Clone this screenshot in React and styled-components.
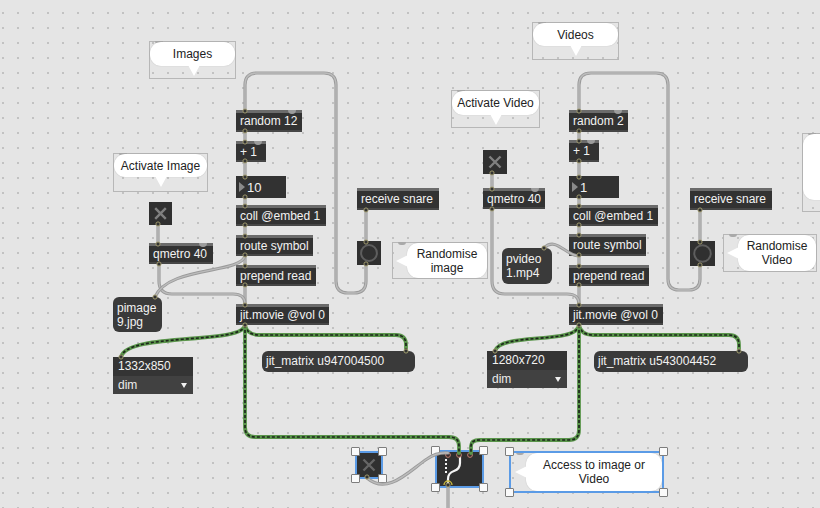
import React from "react";
import styled, { createGlobalStyle, css } from "styled-components";

const GlobalStyle = createGlobalStyle`
  html, body {
    margin: 0;
    padding: 0;
    background: #e5e5e5;
  }
  body {
    font-family: "Liberation Sans", Arial, sans-serif;
  }
`;

const Patcher = styled.div`
  position: relative;
  width: 820px;
  height: 508px;
  overflow: hidden;
  background-color: #e5e5e5;
  background-image: radial-gradient(circle at 1px 1px, #c2c2c2 0.9px, transparent 1.4px);
  background-size: 15px 15px;
  background-position: 2px 12px;
  font-family: "Liberation Sans", Arial, sans-serif;
`;

/* every patcher box sits at its own spot on the canvas */
const place = css`
  position: absolute;
  left: ${(p) => p.$x}px;
  top: ${(p) => p.$y}px;
  width: ${(p) => p.$w}px;
  height: ${(p) => p.$h}px;
  box-sizing: border-box;
`;

const ObjectBox = styled.div`
  ${place};
  background: #323232;
  box-shadow: inset 0 3px 0 #6b6b6b, inset 0 -2px 0 #464646;
  color: #f2f2f2;
  font-size: 12px;
  line-height: ${(p) => p.$h + 1}px;
  padding-left: 4px;
  white-space: nowrap;
`;

const InletMark = styled.span`
  position: absolute;
  top: 0;
  right: ${(p) => p.$right}px;
  width: 8px;
  height: 4px;
  border-radius: 0 0 4px 4px;
  background: #9c9c9c;
`;

const NumberBox = styled.div`
  ${place};
  display: flex;
  align-items: center;
  gap: 2px;
  background: #323232;
  color: #f2f2f2;
  font-size: 13px;
  padding-left: 3px;
`;

const Arrow = styled.span`
  width: 0;
  height: 0;
  border-top: 5px solid transparent;
  border-bottom: 5px solid transparent;
  border-left: 6px solid #8a8a8a;
`;

const MessageBox = styled.div`
  ${place};
  background: #3a3a3a;
  border-radius: 6px;
  color: #f2f2f2;
  font-size: 12px;
  line-height: ${(p) => (p.$multi ? "14px" : `${p.$h}px`)};
  padding: ${(p) => (p.$multi ? "4px 4px 0" : "0 4px")};
  white-space: pre;
`;

const AttrBox = styled.div`
  ${place};
  background: #343434;
  color: #f2f2f2;
  font-size: 12px;
  line-height: ${(p) => p.$h}px;
  padding-left: 5px;
`;

const MenuBox = styled.div`
  ${place};
  display: flex;
  align-items: center;
  justify-content: space-between;
  background: #414141;
  color: #ececec;
  font-size: 12px;
  padding: 0 6px 0 5px;
`;

const MenuCaret = styled.span`
  width: 0;
  height: 0;
  border-left: 3.5px solid transparent;
  border-right: 3.5px solid transparent;
  border-top: 5px solid #f0f0f0;
`;

const UiBox = styled.div`
  ${place};
  background: #303030;
  display: flex;
  align-items: center;
  justify-content: center;
`;

const CommentFrame = styled.div`
  ${place};
  border: 1px solid #b7b7b7;

  &::before {
    content: "";
    position: absolute;
    left: 5px;
    top: -1px;
    width: 8px;
    height: 3px;
    border-radius: 0 0 4px 4px;
    background: #a9a9a9;
  }
`;

const Bubble = styled.div`
  position: absolute;
  background: #ffffff;
  border-radius: 11px;
  box-shadow: 0 0 1px rgba(0, 0, 0, 0.25);
  display: flex;
  flex-direction: column;
  align-items: center;
  justify-content: center;
  color: #222;
  font-size: 12px;
  line-height: 14px;
  text-align: center;
  white-space: nowrap;

  ${(p) =>
    p.$tail === "down"
      ? css`
          left: 0;
          top: 0;
          right: 0;
          height: ${p.$bh}px;
          &::after {
            content: "";
            position: absolute;
            left: ${p.$tx - 6}px;
            bottom: -10px;
            border-left: 6px solid transparent;
            border-right: 6px solid transparent;
            border-top: 11px solid #ffffff;
          }
        `
      : css`
          left: ${p.$lx}px;
          top: 0;
          right: 0;
          bottom: 0;
          &::after {
            content: "";
            position: absolute;
            left: -11px;
            top: calc(50% - 6px);
            border-top: 6px solid transparent;
            border-bottom: 6px solid transparent;
            border-right: 12px solid #ffffff;
          }
        `}
`;

const SelectFrame = styled.div`
  ${place};
  border: 2px solid #5b9be6;
`;

const Handle = styled.span`
  position: absolute;
  width: 7px;
  height: 7px;
  background: #fafafa;
  border: 1px solid #7d7d7d;
  border-radius: 1px;
  ${(p) => (p.$top ? "top: -6px;" : "bottom: -6px;")}
  ${(p) => (p.$left ? "left: -6px;" : "right: -6px;")}
`;

const CordLayer = styled.svg`
  position: absolute;
  left: 0;
  top: 0;
  pointer-events: none;
`;

const objects = [
  { x: 236, y: 110, w: 66, h: 22, t: "random 12", marks: [6] },
  { x: 236, y: 141, w: 30, h: 21, t: "+ 1", marks: [4] },
  { x: 236, y: 205, w: 90, h: 21, t: "coll @embed 1" },
  { x: 236, y: 235, w: 77, h: 21, t: "route symbol" },
  { x: 236, y: 265, w: 80, h: 21, t: "prepend read" },
  { x: 236, y: 304, w: 93, h: 21, t: "jit.movie @vol 0" },
  { x: 149, y: 243, w: 64, h: 21, t: "qmetro 40", marks: [6] },
  { x: 357, y: 188, w: 82, h: 22, t: "receive snare" },
  { x: 569, y: 110, w: 59, h: 22, t: "random 2", marks: [6] },
  { x: 569, y: 140, w: 30, h: 22, t: "+ 1", marks: [4] },
  { x: 569, y: 205, w: 89, h: 21, t: "coll @embed 1" },
  { x: 569, y: 234, w: 77, h: 22, t: "route symbol" },
  { x: 569, y: 265, w: 80, h: 21, t: "prepend read" },
  { x: 569, y: 304, w: 94, h: 21, t: "jit.movie @vol 0" },
  { x: 483, y: 188, w: 62, h: 21, t: "qmetro 40", marks: [6] },
  { x: 690, y: 188, w: 82, h: 22, t: "receive snare" },
];

const numbers = [
  { x: 236, y: 176, w: 50, h: 22, v: "10" },
  { x: 569, y: 176, w: 50, h: 22, v: "1" },
];

const messages = [
  { x: 113, y: 297, w: 49, h: 35, t: "pimage\n9.jpg", multi: true },
  { x: 502, y: 248, w: 50, h: 36, t: "pvideo\n1.mp4", multi: true },
  { x: 262, y: 351, w: 153, h: 21, t: "jit_matrix u947004500" },
  { x: 594, y: 351, w: 154, h: 21, t: "jit_matrix u543004452" },
];

const menus = [
  { x: 113, y: 357, w: 80, value: "1332x850" },
  { x: 487, y: 351, w: 80, value: "1280x720" },
];

const toggles = [
  { x: 149, y: 202, s: 23 },
  { x: 483, y: 150, s: 24 },
];

const buttons = [
  { x: 357, y: 241, s: 24 },
  { x: 690, y: 241, s: 25 },
];

const comments = [
  { x: 149, y: 41, w: 87, h: 38, tail: "down", bh: 24, tx: 44, lines: ["Images"] },
  { x: 113, y: 153, w: 95, h: 39, tail: "down", bh: 23, tx: 47, lines: ["Activate Image"] },
  { x: 532, y: 22, w: 87, h: 38, tail: "down", bh: 23, tx: 43, lines: ["Videos"] },
  { x: 451, y: 90, w: 89, h: 38, tail: "down", bh: 24, tx: 44, lines: ["Activate Video"] },
  { x: 392, y: 242, w: 96, h: 37, tail: "left", lx: 14, lines: ["Randomise", "image"] },
  { x: 723, y: 234, w: 94, h: 38, tail: "left", lx: 14, lines: ["Randomise", "Video"] },
  { x: 802, y: 133, w: 60, h: 79, tail: "down", bh: 66, tx: 30, lines: [""] },
];

const greyCords = [
  "M366 265 V281 Q366 293 354 293 H348 Q336 293 336 281 V85 Q336 73 324 73 H257 Q245 73 245 85 V110",
  "M700 266 V279 Q700 290 689 290 H679 Q668 290 668 279 V85 Q668 73 656 73 H591 Q579 73 579 85 V110",
  "M245 132 V141",
  "M245 162 V176",
  "M245 198 V205",
  "M245 226 V235",
  "M245 256 V265",
  "M245 286 V304",
  "M579 132 V140",
  "M579 162 V176",
  "M579 198 V205",
  "M579 226 V234",
  "M579 256 V265",
  "M579 286 V304",
  "M158 225 V243",
  "M492 174 V188",
  "M366 210 V241",
  "M700 210 V241",
  "M159 264 V281 Q159 294 172 294 H233 Q245 294 245 304",
  "M245 256 C240 274 168 266 155 297",
  "M492 209 V281 Q492 294 505 294 H567 Q579 294 579 304",
  "M544 248 C556 236 566 256 579 256",
  "M367 478 C388 496 410 470 427 459 Q437 452 448 453",
  "M448 486 V512",
];

const greenCords = [
  "M245 325 C243 345 127 332 121 357",
  "M245 325 Q247 335 259 335 H396 Q406 335 406 345 V351",
  "M245 325 V427 Q245 437 255 437 H449 Q459 437 459 446 V453",
  "M579 325 C577 345 500 332 495 351",
  "M579 325 Q581 335 593 335 H729 Q739 335 739 345 V351",
  "M579 325 V430 Q579 440 569 440 H480 Q471 440 471 446 V453",
];

const ports = [
  [245, 111], [245, 131], [245, 142], [245, 161], [245, 177], [245, 197], [245, 206],
  [245, 225], [245, 236], [245, 255], [245, 266], [245, 285], [245, 305], [245, 325],
  [579, 111], [579, 131], [579, 141], [579, 161], [579, 177], [579, 197], [579, 206],
  [579, 225], [579, 235], [579, 255], [579, 266], [579, 285], [579, 305], [579, 325],
  [158, 224], [158, 244], [159, 264], [155, 297], [121, 357], [406, 351],
  [492, 173], [492, 189], [492, 209], [544, 248], [495, 351], [739, 351],
  [366, 210], [366, 242], [366, 264], [700, 210], [700, 242], [700, 265],
  [367, 477], [448, 485],
];

const Handles = () => (
  <>
    <Handle $top $left />
    <Handle $top />
    <Handle $left />
    <Handle />
  </>
);

const ToggleX = ({ s, color = "#808080" }) => (
  <svg width={s} height={s}>
    <path d={`M${s * 0.27} ${s * 0.27} L${s * 0.73} ${s * 0.73} M${s * 0.73} ${s * 0.27} L${s * 0.27} ${s * 0.73}`} stroke={color} strokeWidth="2.4" />
  </svg>
);

const BangCircle = ({ s }) => (
  <svg width={s} height={s}>
    <circle cx={s / 2} cy={s / 2} r={s * 0.33} fill="none" stroke="#5e5e5e" strokeWidth="2" />
  </svg>
);

const Comment = ({ c, children }) => (
  <CommentFrame $x={c.x} $y={c.y} $w={c.w} $h={c.h}>
    <Bubble $tail={c.tail} $bh={c.bh} $tx={c.tx} $lx={c.lx}>
      {c.lines.map((l, i) => (
        <span key={i}>{l}</span>
      ))}
    </Bubble>
    {children}
  </CommentFrame>
);

const App = () => {
  return (
    <>
      <GlobalStyle />
      <Patcher>
        {comments.map((c, i) => (
          <Comment key={i} c={c} />
        ))}

        {objects.map((o, i) => (
          <ObjectBox key={i} $x={o.x} $y={o.y} $w={o.w} $h={o.h}>
            {o.t}
            {(o.marks || []).map((m) => (
              <InletMark key={m} $right={m} />
            ))}
          </ObjectBox>
        ))}

        {numbers.map((n, i) => (
          <NumberBox key={i} $x={n.x} $y={n.y} $w={n.w} $h={n.h}>
            <Arrow />
            {n.v}
          </NumberBox>
        ))}

        {messages.map((m, i) => (
          <MessageBox key={i} $x={m.x} $y={m.y} $w={m.w} $h={m.h} $multi={m.multi}>
            {m.t}
          </MessageBox>
        ))}

        {menus.map((m, i) => (
          <React.Fragment key={i}>
            <AttrBox $x={m.x} $y={m.y} $w={m.w} $h={19}>
              {m.value}
            </AttrBox>
            <MenuBox $x={m.x} $y={m.y + 19} $w={m.w} $h={18}>
              dim
              <MenuCaret />
            </MenuBox>
          </React.Fragment>
        ))}

        {toggles.map((t, i) => (
          <UiBox key={i} $x={t.x} $y={t.y} $w={t.s} $h={t.s}>
            <ToggleX s={t.s} />
          </UiBox>
        ))}

        {buttons.map((b, i) => (
          <UiBox key={i} $x={b.x} $y={b.y} $w={b.s} $h={b.s}>
            <BangCircle s={b.s} />
          </UiBox>
        ))}

        {/* selected objects at the bottom */}
        <UiBox $x={357} $y={453} $w={24} $h={24}>
          <ToggleX s={24} color="#666" />
        </UiBox>
        <SelectFrame $x={355} $y={451} $w={28} $h={28}>
          <Handles />
        </SelectFrame>

        <UiBox $x={437} $y={452} $w={45} $h={34}>
          <svg width="45" height="34">
            <path d="M9 7 V21" stroke="#f4f4f4" strokeWidth="2" strokeDasharray="2 2" />
            <path d="M11 34 V27 Q11 21 17 19 Q23 17 23 11 V3" stroke="#f4f4f4" strokeWidth="2.2" fill="none" />
            <circle cx="11" cy="3" r="2.4" fill="#3a2a2a" stroke="#c08070" strokeWidth="1" />
            <circle cx="22" cy="3" r="2.4" fill="#3a2a2a" stroke="#c08070" strokeWidth="1" />
            <circle cx="33" cy="3" r="2.4" fill="#3a2a2a" stroke="#c08070" strokeWidth="1" />
            <path d="M7 33 A4 4 0 0 1 15 33" stroke="#c8b840" strokeWidth="1.3" fill="none" />
          </svg>
        </UiBox>
        <SelectFrame $x={435} $y={450} $w={49} $h={38}>
          <Handles />
        </SelectFrame>

        <Comment c={{ x: 510, y: 452, w: 153, h: 40, tail: "left", lx: 15, lines: ["Access to image or", "Video"] }} />
        <SelectFrame $x={509} $y={451} $w={155} $h={42}>
          <Handles />
        </SelectFrame>

        <CordLayer width="820" height="508">
          {greyCords.map((d, i) => (
            <g key={i} fill="none" strokeLinecap="round">
              <path d={d} stroke="#9b9b9b" strokeWidth="3.2" />
              <path d={d} stroke="#bcbcbc" strokeWidth="1.3" />
            </g>
          ))}
          {greenCords.map((d, i) => (
            <g key={i} fill="none">
              <path d={d} stroke="#5a954b" strokeWidth="3.8" strokeLinecap="round" />
              <path d={d} stroke="#1d261c" strokeWidth="1.7" strokeDasharray="3 2" />
            </g>
          ))}
          {ports.map(([x, y], i) => (
            <circle key={i} cx={x} cy={y} r="2.1" fill="#333" stroke="#a8a272" strokeWidth="0.9" />
          ))}
        </CordLayer>
      </Patcher>
    </>
  );
};

export default App;
